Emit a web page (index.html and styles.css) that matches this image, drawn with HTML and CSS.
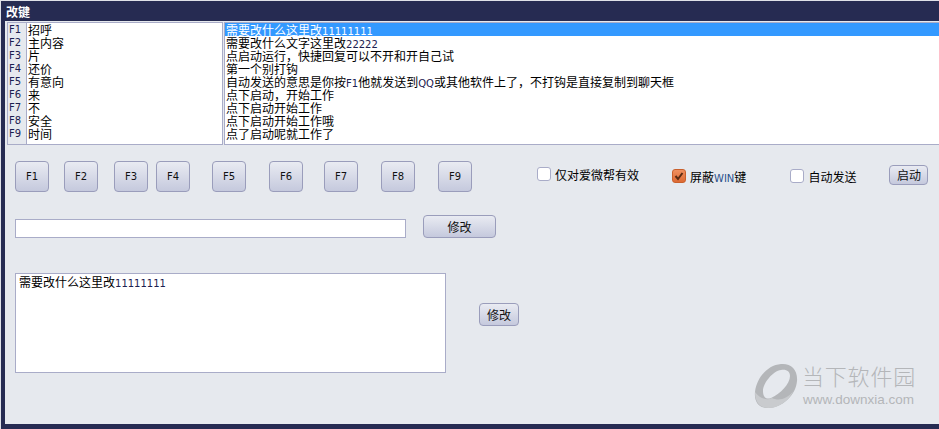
FILE: index.html
```html
<!DOCTYPE html>
<html lang="zh-CN">
<head>
	<meta charset="UTF-8">
	<title>改键</title>
	<link rel="stylesheet" href="styles.css">
</head>
<body>
	<div class="window">
		<div class="title">改键</div>
		<div class="lists">
			<div class="key-list">
				<ul class="keys">
					<li>F1</li>
					<li>F2</li>
					<li>F3</li>
					<li>F4</li>
					<li>F5</li>
					<li>F6</li>
					<li>F7</li>
					<li>F8</li>
					<li>F9</li>
				</ul>
				<ul class="names">
					<li>招呼</li>
					<li>主内容</li>
					<li>片</li>
					<li>还价</li>
					<li>有意向</li>
					<li>来</li>
					<li>不</li>
					<li>安全</li>
					<li>时间</li>
				</ul>
			</div>
			<ul class="msg-list">
				<li class="on">需要改什么这里改<span class="num">11111111</span></li>
				<li>需要改什么文字这里改<span class="num">22222</span></li>
				<li>点启动运行，快捷回复可以不开和开自己试</li>
				<li>第一个别打钩</li>
				<li>自动发送的意思是你按<span class="num">F1</span>他就发送到<span class="num">QQ</span>或其他软件上了，不打钩是直接复制到聊天框</li>
				<li>点下启动，开始工作</li>
				<li>点下启动开始工作</li>
				<li>点下启动开始工作哦</li>
				<li>点了启动呢就工作了</li>
			</ul>
		</div>
		<div class="tools">
			<button class="btn fkey">F1</button>
			<button class="btn fkey f2">F2</button>
			<button class="btn fkey f3">F3</button>
			<button class="btn fkey f4">F4</button>
			<button class="btn fkey f5">F5</button>
			<button class="btn fkey f6">F6</button>
			<button class="btn fkey f7">F7</button>
			<button class="btn fkey f8">F8</button>
			<button class="btn fkey f9">F9</button>
			<div class="check c1"><i class="box"></i><span>仅对爱微帮有效</span></div>
			<div class="check c2">
				<i class="box checked">
					<svg width="14" height="14" viewBox="0 0 14 14"><path d="M3.5 7 L6 10 L10.5 4" fill="none" stroke="#5a2c14" stroke-width="2"/></svg>
				</i>
				<span>屏蔽<span class="win">WIN</span>键</span>
			</div>
			<div class="check c3"><i class="box"></i><span>自动发送</span></div>
			<button class="btn start">启动</button>
		</div>
		<div class="edit-row">
			<div class="line-input"></div>
			<button class="btn edit-btn">修改</button>
		</div>
		<div class="text-row">
			<div class="text-box">需要改什么这里改<span class="num">11111111</span></div>
			<button class="btn edit-small">修改</button>
		</div>
		<div class="mark">
			<svg class="mark-logo" width="44" height="46" viewBox="0 0 44 46">
				<path fill="#b4b6b9" fill-rule="evenodd" d="M27 1 C37 0 44 7 43 18 C42 32 28 45 14 45 C5 45 0 39 1 29 C3 14 14 2 27 1 Z M27 7 C19 8 9 20 9 28 C9 34 12 37 17 35 C26 31 36 21 36 13 C36 8 32 6 27 7 Z"/>
				<path fill="#c9cbce" d="M1 29 C5 35 12 38 18 35 C24 38 33 37 40 27 C34 39 24 45 14 45 C6 45 1 39 1 29 Z"/>
			</svg>
			<div>
				<div class="mark-cn">当下软件园</div>
				<div class="mark-url">www.downxia.com</div>
			</div>
		</div>
	</div>
</body>
</html>
```

FILE: styles.css
```css
*{
	margin: 0;
	padding: 0;
	box-sizing: border-box;
}
html, body{
	height: 100%;
	overflow: hidden;
}
body{
	background: #dfe1e8;
	padding: 1px 0 0 1px;
	font: 12px/13px "Noto Sans CJK SC", "Liberation Sans", sans-serif;
	color: #000;
}
ul{
	list-style: none;
}
.window{
	position: relative;
	height: 428px;
	background: #e6e9ee;
	border-left: 4px solid #262b52;
	border-bottom: 5px solid #262b52;
}
.title{
	height: 20px;
	margin-left: -4px;
	padding: 4px 0 0 5px;
	background: #262b52;
	color: #fff;
	font-weight: bold;
}
.lists{
	display: flex;
	height: 124px;
	padding: 1px 0 0 2px;
}
.key-list{
	display: flex;
	width: 216px;
	border: 1px solid #a9acc8;
	background: #e6e9ee;
}
.keys{
	width: 17px;
	font-family: "DejaVu Sans", sans-serif;
	font-size: 10px;
	color: #1c2050;
	padding-left: 1px;
}
.names{
	flex: 1;
	margin-left: 1px;
	background: #fff;
	border-left: 1px solid #a9acc8;
	padding-left: 1px;
}
.msg-list{
	flex: 1;
	margin-left: 1px;
	background: #fff;
	border: 1px solid #a9acc8;
	border-right: 0;
}
.msg-list li{
	padding-left: 1px;
}
.msg-list .on{
	background: #3399ff;
	color: #fff;
}
.num{
	font-family: "DejaVu Sans", sans-serif;
	font-size: 10px;
	line-height: 0;
	color: #1c2050;
}
.on .num{
	color: #fff;
}
.btn{
	font: inherit;
	color: #111;
	border: 1px solid #9a9dbb;
	border-radius: 4px;
	background: linear-gradient(#e9ebf2, #c5c9dd);
}
.tools{
	display: flex;
	align-items: flex-start;
	height: 31px;
	margin-top: 16px;
	padding-left: 10px;
}
.fkey{
	width: 34px;
	height: 31px;
	font-family: "DejaVu Sans", sans-serif;
	font-size: 10px;
}
.f2{ margin-left: 15px; }
.f3{ margin-left: 16px; }
.f4{ margin-left: 8px; }
.f5{ margin-left: 22px; }
.f6{ margin-left: 23px; }
.f7{ margin-left: 21px; }
.f8{ margin-left: 23px; }
.f9{ margin-left: 23px; }
.check{
	display: flex;
	align-items: center;
	height: 14px;
}
.box{
	flex: none;
	display: block;
	width: 14px;
	height: 14px;
	margin-right: 4px;
	border: 1px solid #a9acc8;
	border-radius: 3px;
	background: #fff;
}
.box svg{
	display: block;
	margin: -1px;
}
.box.checked{
	border-color: #c9602c;
	background: linear-gradient(#ef9060, #dd6a34);
}
.c1{ margin: 6px 0 0 65px; }
.c2{ margin: 8px 0 0 33px; }
.c3{ margin: 8px 0 0 44px; }
.win{
	font-family: "DejaVu Sans", sans-serif;
	font-size: 10px;
	line-height: 0;
	color: #2a4f8a;
}
.start{
	width: 39px;
	height: 20px;
	margin: 4px 0 0 33px;
	line-height: 16px;
}
.edit-row{
	display: flex;
	align-items: flex-end;
	height: 23px;
	margin-top: 23px;
	padding-left: 10px;
}
.line-input{
	width: 391px;
	height: 19px;
	background: #fff;
	border: 1px solid #a9acc8;
}
.edit-btn{
	width: 73px;
	height: 23px;
	margin-left: 17px;
}
.text-row{
	display: flex;
	margin-top: 35px;
	padding-left: 10px;
}
.text-box{
	width: 431px;
	height: 100px;
	padding: 1px 3px;
	background: #fff;
	border: 1px solid #a9acc8;
}
.edit-small{
	width: 40px;
	height: 23px;
	margin: 30px 0 0 33px;
}
.mark{
	position: absolute;
	left: 749px;
	top: 362px;
	display: flex;
	gap: 5px;
	color: #b4b6b9;
}
.mark-cn{
	margin-left: -1px;
	font-size: 22px;
	line-height: 24px;
	font-weight: 300;
	letter-spacing: .8px;
	white-space: nowrap;
}
.mark-url{
	margin-top: 5px;
	font: 13.5px/15px "Liberation Sans", sans-serif;
	white-space: nowrap;
}
```
